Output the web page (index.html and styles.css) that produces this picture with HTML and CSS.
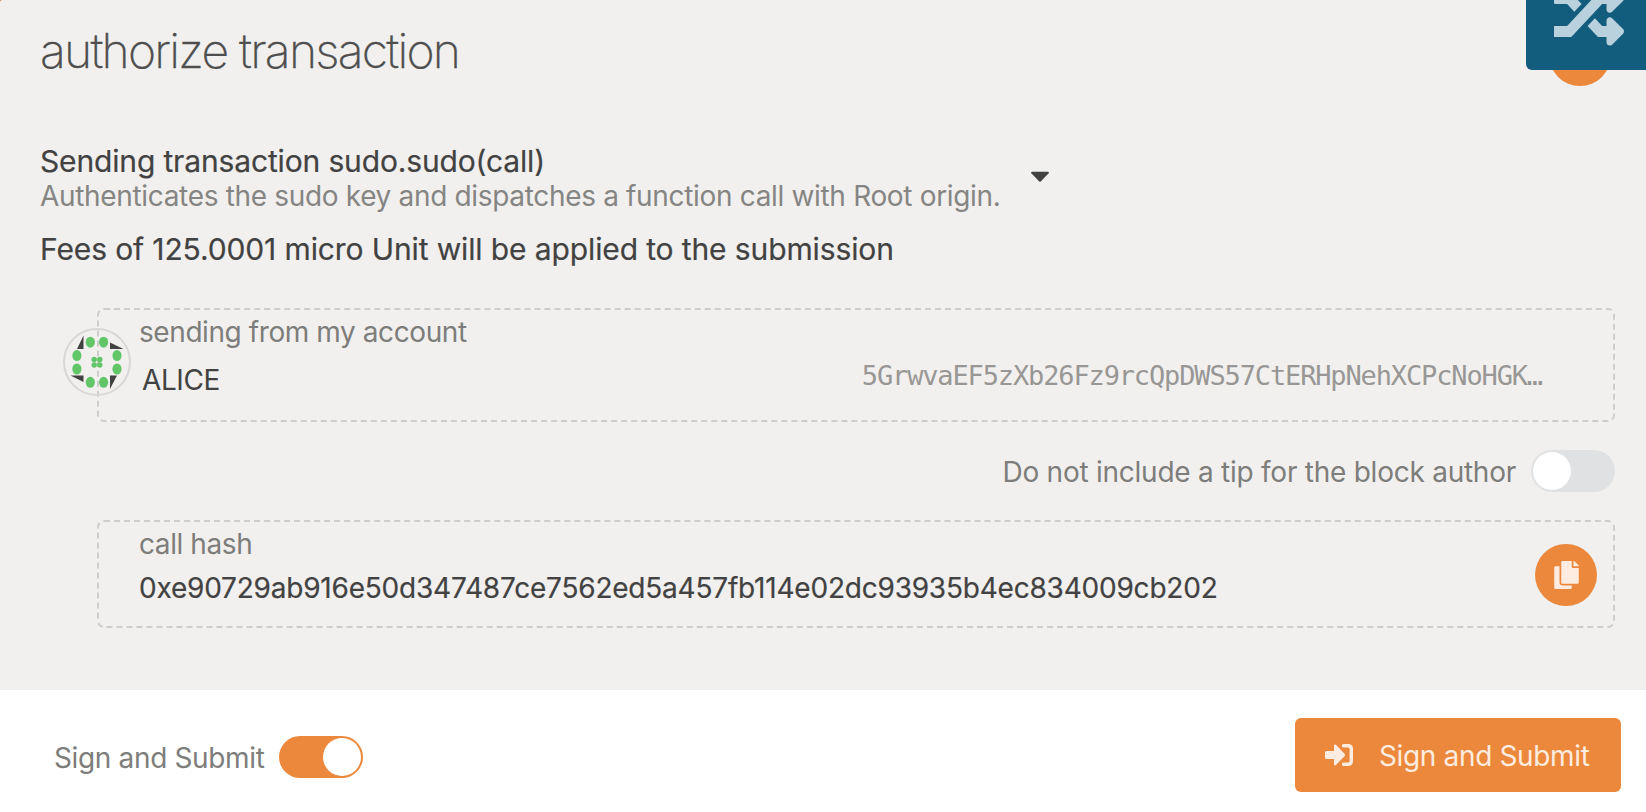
FILE: index.html
```html
<!DOCTYPE html>
<html lang="en">
<head>
<meta charset="utf-8">
<title>authorize transaction</title>
<link rel="stylesheet" href="styles.css">
</head>
<body>
<div class="modal">
  <main class="content">
    <h1 class="title"><span>authorize transaction</span></h1>
    <section class="call">
      <div class="call-text">
        <div class="call-name"><span>Sending transaction sudo.sudo(call)</span></div>
        <div class="call-doc"><span>Authenticates the sudo key and dispatches a function call with Root origin.</span></div>
      </div>
      <svg class="caret" viewBox="0 0 20 12"><path d="M2 .8H18Q19.6 1 18.6 2.2L11 10.2Q10 11.2 9 10.2L1.4 2.2Q.4 1 2 .8Z"/></svg>
    </section>
    <div class="fees"><span>Fees of 125.0001 micro Unit will be applied to the submission</span></div>
    <section class="box account">
      <svg class="identicon" viewBox="0 0 68 68">
        <circle class="ring" cx="34" cy="34" r="33"/>
        <g class="dark">
          <path d="M14 21L20.5 7.5V21ZM47 14.5L60.500 21H47ZM54 47.500L47 61V47.500ZM7.500 47.500H20.500V54Z"/>
        </g>
        <g class="green">
          <ellipse cx="27.300" cy="14.200" rx="4.600" ry="5.500"/><ellipse cx="40.600" cy="14.200" rx="4.600" ry="5.500"/>
          <ellipse cx="13.900" cy="27.600" rx="4.600" ry="5.500"/><ellipse cx="54" cy="27.600" rx="4.600" ry="5.500"/>
          <ellipse cx="13.900" cy="41" rx="4.600" ry="5.500"/><ellipse cx="54" cy="41" rx="4.600" ry="5.500"/>
          <ellipse cx="27.300" cy="54.300" rx="4.600" ry="5.500"/><ellipse cx="40.600" cy="54.300" rx="4.600" ry="5.500"/>
          <circle cx="31.200" cy="31.500" r="2.700"/><circle cx="36.800" cy="31.500" r="2.700"/>
          <circle cx="31.200" cy="37" r="2.700"/><circle cx="36.800" cy="37" r="2.700"/>
        </g>
      </svg>
      <div class="box-label from"><span>sending from my account</span></div>
      <div class="account-row">
        <div class="account-name"><span>ALICE</span></div>
        <div class="address"><span>5GrwvaEF5zXb26Fz9rcQpDWS57CtERHpNehXCPcNoHGK…</span></div>
      </div>
    </section>
    <div class="tip">
      <span class="tip-label">Do not include a tip for the block author</span>
      <span class="toggle"></span>
    </div>
    <section class="box hash-box">
      <div>
        <div class="box-label hash-label"><span>call hash</span></div>
        <div class="hash"><span>0xe90729ab916e50d347487ce7562ed5a457fb114e02dc93935b4ec834009cb202</span></div>
      </div>
      <button class="copy" aria-label="copy">
        <svg viewBox="0 0 448 512"><path d="M320 448v40c0 13.255-10.745 24-24 24H24c-13.255 0-24-10.745-24-24V120c0-13.255 10.745-24 24-24h72v296c0 30.879 25.121 56 56 56h168zm0-344V0H152c-13.255 0-24 10.745-24 24v368c0 13.255 10.745 24 24 24h272c13.255 0 24-10.745 24-24V128H344c-13.200 0-24-10.800-24-24zm120.971-31.029L375.029 7.029A24 24 0 0 0 358.059 0H352v96h96v-6.059a24 24 0 0 0-7.029-16.970z"/></svg>
      </button>
    </section>
  </main>
  <footer class="footer">
    <div class="sign">
      <span class="sign-label">Sign and Submit</span>
      <span class="toggle on"></span>
    </div>
    <button class="submit">
      <svg viewBox="0 0 28 22"><path class="arrow" d="M1.500 7H9V1.600Q9.200-.3 11 .8L19.500 9.700Q20.600 11 19.500 12.200L11 21Q9.200 22.200 9 20.400V15H1.500Q0 15 0 13.500V8.500Q0 7 1.500 7Z"/><path class="door" d="M18.500 1.700H23Q26.300 1.700 26.300 5V17Q26.300 20.300 23 20.300H18.500"/></svg>
      <span class="submit-label">Sign and Submit</span>
    </button>
  </footer>
  <span class="close"></span>
  <div class="status">
    <svg viewBox="0 0 512 512"><path d="M504.971 359.029c9.373 9.373 9.373 24.569 0 33.941l-80 79.984c-15.010 15.010-40.971 4.490-40.971-16.971V416h-58.785a12.004 12.004 0 0 1-8.773-3.812l-70.556-75.596 53.333-57.143L352 336h32v-39.981c0-21.438 25.943-31.998 40.971-16.971l80 79.981zM12 176h84l52.781 56.551 53.333-57.143-70.556-75.596A11.999 11.999 0 0 0 122.785 96H12c-6.627 0-12 5.373-12 12v56c0 6.627 5.373 12 12 12zm372 0v39.984c0 21.460 25.961 31.980 40.971 16.971l80-79.984c9.373-9.373 9.373-24.569 0-33.941l-80-79.981C409.943 24.021 384 34.582 384 56.019V96h-58.785a12.004 12.004 0 0 0-8.773 3.812L96 336H0v80h122.785c3.326 0 6.503-1.381 8.773-3.812L352 176h32z"/></svg>
  </div>
</div>
</body>
</html>
```
FILE: styles.css
```css
* { box-sizing: border-box; }
body {
  margin: 0;
  background: #c86f35;
  font-family: Inter, "Liberation Sans", sans-serif;
  font-weight: 400;
  color: #424242;
}
button { border: 0; padding: 0; font: inherit; }
svg { display: block; }
.modal {
  position: relative;
  display: flex;
  flex-direction: column;
  width: 1646px;
  height: 812px;
  overflow: hidden;
  background: #f1f0ee;
  border-top-left-radius: 2px;
  white-space: nowrap;
}
.content {
  height: 690px;
  padding: 21px 31px 0 40px;
}
.title {
  margin: 0;
  height: 60px;
  line-height: 60px;
  font-size: 48px;
  font-weight: 200;
  letter-spacing: -1.760px;
  -webkit-text-stroke: 0.300px #4e4e4e;
  color: #4e4e4e;
}
.call { display: flex; margin-top: 62px; }
.call-name, .fees { font-size: 30px; line-height: 36px; -webkit-text-stroke: 0.200px #424242; }
.call-name { letter-spacing: -0.150px; }
.call-doc { font-size: 28px; line-height: 34px; color: #858583; letter-spacing: -0.330px; }
.caret { width: 20px; height: 12px; margin: 28px 0 0 29px; fill: #424242; }
.fees { margin-top: 18px; letter-spacing: -0.120px; }
.box {
  position: relative;
  margin-left: 57px;
  border: 2px dashed #cecdcb;
  border-radius: 7px;
}
.account { height: 114px; margin-top: 41px; padding: 5px 71px 0 40px; }
.identicon { position: absolute; left: -36px; top: 18px; width: 68px; height: 68px; }
.ring { fill: none; stroke: #d8d7d5; stroke-width: 2; }
.green { fill: #62c668; }
.dark { fill: #424242; }
.box-label { font-size: 28px; line-height: 34px; color: #7d7d7b; letter-spacing: -0.420px; }
.account-row { display: flex; justify-content: space-between; margin-top: 8px; }
.account-name { font-size: 28px; line-height: 46px; padding-left: 3px; letter-spacing: -0.400px; }
.address {
  font: 27px/38px "DejaVu Sans Mono", monospace;
  letter-spacing: -1.140px;
  color: #989795;
}
.tip { display: flex; justify-content: flex-end; align-items: center; margin-top: 28px; height: 42px; }
.tip-label, .sign-label { font-size: 28px; line-height: 34px; padding-top: 2px; color: #7d7d7b; }
.tip-label { margin-right: 15px; letter-spacing: -0.250px; }
.sign-label, .submit-label { letter-spacing: -0.350px; }
.toggle {
  width: 84px;
  height: 42px;
  padding: 2px;
  border-radius: 21px;
  background: #dfe1e3;
}
.toggle::before {
  content: "";
  display: block;
  width: 38px;
  height: 38px;
  border-radius: 50%;
  background: #fff;
}
.toggle.on { background: #ec883c; }
.toggle.on::before { margin-left: auto; }
.hash-box {
  display: flex;
  justify-content: space-between;
  height: 108px;
  margin-top: 28px;
  padding: 5px 16px 0 40px;
}
.hash {
  margin-top: 10px;
  font-size: 28px;
  line-height: 34px;
  letter-spacing: -0.210px;
  -webkit-text-stroke: 0.200px #424242;
}
.copy {
  display: grid;
  place-items: center;
  width: 62px;
  height: 62px;
  margin-top: 17px;
  border-radius: 50%;
  background: #ec883c;
}
.copy svg { width: 25px; height: 28px; fill: #fdecdf; }
.footer {
  display: flex;
  align-items: center;
  justify-content: space-between;
  flex: 1;
  padding: 8px 25px 0 54px;
  background: #fff;
}
.sign { display: flex; align-items: center; padding-top: 4px; gap: 14px; }
.submit {
  display: flex;
  align-items: center;
  width: 326px;
  height: 74px;
  padding-left: 30px;
  border-radius: 6px;
  background: #ec883c;
  color: #fdecdf;
}
.submit svg { width: 28px; height: 22px; margin-right: 26px; }
.arrow { fill: #fdecdf; }
.door { fill: none; stroke: #fdecdf; stroke-width: 3.400; stroke-linecap: round; }
.submit-label { font-size: 28px; line-height: 34px; padding-top: 2px; }
.close {
  position: absolute;
  left: 1549px;
  top: 24px;
  width: 62px;
  height: 62px;
  border-radius: 50%;
  background: #ec883c;
}
.status {
  position: absolute;
  right: 0;
  top: 0;
  width: 120px;
  height: 70px;
  border-bottom-left-radius: 6px;
  background: #125d7d;
}
.status svg { position: absolute; left: 28px; top: -20px; width: 70px; height: 70px; fill: #b8d1dc; }
```
